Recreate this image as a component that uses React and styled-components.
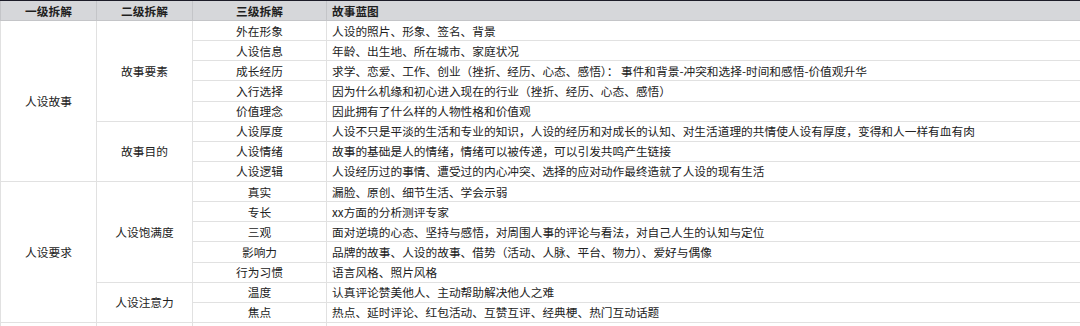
import React from 'react';
import styled, { createGlobalStyle } from 'styled-components';

const GlobalStyle = createGlobalStyle`
  html, body {
    margin: 0;
    padding: 0;
    background: #fff;
    overflow: hidden;
  }
  body {
    font-family: "Noto Sans CJK SC", "Noto Sans", sans-serif;
    color: #222;
  }
`;

const rows = [
  { l1: '人设故事', l1span: 8, l2: '故事要素', l2span: 5, l3: '外在形象', text: '人设的照片、形象、签名、背景' },
  { l3: '人设信息', text: '年龄、出生地、所在城市、家庭状况' },
  { l3: '成长经历', text: '求学、恋爱、工作、创业（挫折、经历、心态、感悟）： 事件和背景-冲突和选择-时间和感悟-价值观升华' },
  { l3: '入行选择', text: '因为什么机缘和初心进入现在的行业（挫折、经历、心态、感悟）' },
  { l3: '价值理念', text: '因此拥有了什么样的人物性格和价值观' },
  { l2: '故事目的', l2span: 3, l3: '人设厚度', text: '人设不只是平淡的生活和专业的知识，人设的经历和对成长的认知、对生活道理的共情使人设有厚度，变得和人一样有血有肉' },
  { l3: '人设情绪', text: '故事的基础是人的情绪，情绪可以被传递，可以引发共鸣产生链接' },
  { l3: '人设逻辑', text: '人设经历过的事情、遭受过的内心冲突、选择的应对动作最终造就了人设的现有生活' },
  { l1: '人设要求', l1span: 7, l2: '人设饱满度', l2span: 5, l3: '真实', text: '漏脸、原创、细节生活、学会示弱' },
  { l3: '专长', text: 'xx方面的分析测评专家' },
  { l3: '三观', text: '面对逆境的心态、坚持与感悟，对周围人事的评论与看法，对自己人生的认知与定位' },
  { l3: '影响力', text: '品牌的故事、人设的故事、借势（活动、人脉、平台、物力）、爱好与偶像' },
  { l3: '行为习惯', text: '语言风格、照片风格' },
  { l2: '人设注意力', l2span: 2, l3: '温度', text: '认真评论赞美他人、主动帮助解决他人之难' },
  { l3: '焦点', text: '热点、延时评论、红包活动、互赞互评、经典梗、热门互动话题' },
];

export default function App() {
  return (
    <>
      <GlobalStyle />
      <Sheet>
        <Table>
          <colgroup>
            <col style={{ width: 96 }} />
            <col style={{ width: 96 }} />
            <col style={{ width: 134 }} />
            <col />
          </colgroup>
          <thead>
            <tr>
              <Head>一级拆解</Head>
              <Head>二级拆解</Head>
              <Head>三级拆解</Head>
              <Head $left>故事蓝图</Head>
            </tr>
          </thead>
          <tbody>
            {rows.map((r, i) => (
              <Row key={i}>
                {r.l1 && <Cell rowSpan={r.l1span}>{r.l1}</Cell>}
                {r.l2 && <Cell rowSpan={r.l2span}>{r.l2}</Cell>}
                <Cell>{r.l3}</Cell>
                <Cell $left>{r.text}</Cell>
              </Row>
            ))}
            <Row>
              <Cell />
              <Cell />
              <Cell />
              <Cell $left />
            </Row>
          </tbody>
        </Table>
      </Sheet>
    </>
  );
}

const Sheet = styled.div`
  width: 1080px;
  height: 326px;
  overflow: hidden;
  border-top: 1px solid #1c1c28;
  box-sizing: border-box;
`;

const Table = styled.table`
  width: 1081px;
  table-layout: fixed;
  border-collapse: collapse;
  font-size: 11.7px;
  line-height: 16px;
`;

const Head = styled.th`
  height: 19px;
  padding: 0 5px;
  background: #d6d7da;
  border: 1px solid #c4c5c8;
  border-top: none;
  font-weight: 700;
  color: #1e1e1e;
  text-align: ${p => (p.$left ? 'left' : 'center')};
  white-space: nowrap;
`;

const Row = styled.tr`
  height: 20.14px;
`;

const Cell = styled.td`
  padding: 0 5px;
  border: 1px solid #e1e1e1;
  text-align: ${p => (p.$left ? 'left' : 'center')};
  vertical-align: middle;
  white-space: nowrap;
  overflow: hidden;
  color: #222;
`;
